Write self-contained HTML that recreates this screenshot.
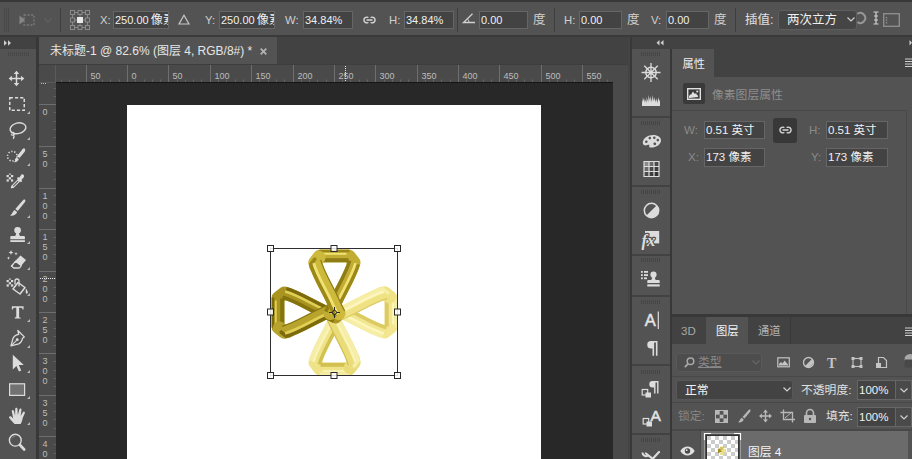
<!DOCTYPE html>
<html lang="zh"><head><meta charset="utf-8"><title>PS</title>
<style>
*{box-sizing:border-box;margin:0;padding:0}
html,body{width:912px;height:459px;overflow:hidden;background:#535353}
body{position:relative;font-family:"Liberation Sans","Noto Sans CJK SC",sans-serif;font-size:12px;color:#dcdcdc;line-height:1}
.a{position:absolute}
.t{position:absolute;white-space:nowrap;line-height:16px;height:16px}
.in{position:absolute;background:#434343;border:1px solid #666;height:18px;top:11px;color:#f0f0f0;font-size:11px;line-height:17px;padding-left:1px;white-space:nowrap;overflow:hidden}
.in b{font-weight:normal;font-size:12.2px;margin-left:-1px}
.sep{position:absolute;width:1px;background:#3e3e3e;top:8px;height:24px}
.lab{color:#cfcfcf}
svg{position:absolute;overflow:visible}
.rt{position:absolute;font-size:10px;color:#b4b4b4;line-height:10px}
</style></head><body>
<!-- top edge -->
<div class="a" style="left:0;top:0;width:912px;height:2px;background:#383838"></div>
<!-- options bar -->
<div class="a" id="opt" style="left:0;top:2px;width:912px;height:34px;background:#535353"></div>
<div class="a" style="left:0;top:35px;width:912px;height:2px;background:#3a3a3a"></div>


<!-- options bar content -->
<svg style="left:4px;top:8px" width="6" height="24"><g stroke="#484848" stroke-width="1"><path d="M0.5 0V24M2.5 0V24M4.5 0V24"/></g></svg>
<svg style="left:18px;top:11px" width="20" height="18" viewBox="0 0 20 18"><g fill="none" stroke="#7c7c7c" stroke-width="1.3"><rect x="6" y="4" width="10" height="10" stroke-dasharray="2 1.6"/></g><path d="M1.5 4.5L7 9L1.5 13.5Z" fill="#868686"/></svg>
<svg style="left:44px;top:18px" width="8" height="5" viewBox="0 0 8 5"><path d="M0.5 0.5L4 4L7.5 0.5" fill="none" stroke="#606060" stroke-width="1.3"/></svg>
<div class="sep" style="left:60px"></div>
<svg style="left:70px;top:10px" width="20" height="20" viewBox="0 0 20 20"><g fill="none" stroke="#8a8a8a" stroke-width="1"><rect x="0.5" y="0.5" width="4" height="4"/><rect x="8" y="0.5" width="4" height="4"/><rect x="15.5" y="0.5" width="4" height="4"/><rect x="0.5" y="8" width="4" height="4"/><rect x="15.5" y="8" width="4" height="4"/><rect x="0.5" y="15.5" width="4" height="4"/><rect x="8" y="15.5" width="4" height="4"/><rect x="15.5" y="15.5" width="4" height="4"/><path d="M4.5 2.5H8M12 2.5H15.5M4.5 17.5H8M12 17.5H15.5M2.5 4.5V8M2.5 12V15.5M17.500 4.5V8M17.5 12V15.500M4.500 10H7M13 10H15.5M10 4.500V7M10 13V15.500"/></g><rect x="7" y="7" width="6" height="6" fill="#e8e8e8"/></svg>
<div class="t lab" style="left:100px;top:12px;font-size:11.3px">X:</div>
<div class="in" style="left:113px;width:56px">250.00 <b>像素</b></div>
<svg style="left:178px;top:13.500px" width="12" height="11" viewBox="0 0 12 11"><path d="M6 1.200L11 10H1Z" fill="none" stroke="#c8c8c8" stroke-width="1.200"/></svg>
<div class="t lab" style="left:205px;top:12px;font-size:11.3px">Y:</div>
<div class="in" style="left:219px;width:56px">250.00 <b>像素</b></div>
<div class="t lab" style="left:285px;top:12px;font-size:11.3px">W:</div>
<div class="in" style="left:303px;width:50px">34.84%</div>
<svg style="left:362px;top:15.500px" width="15" height="8" viewBox="0 0 14.400 8"><g fill="none" stroke="#d8d8d8" stroke-width="1.4" stroke-linecap="round"><path d="M5.600 1.300A2.900 2.900 0 1 0 5.600 6.700"/><path d="M8.800 1.300A2.900 2.900 0 1 1 8.800 6.700"/><path d="M4.700 4H9.700"/></g></svg>
<div class="t lab" style="left:389px;top:12px;font-size:11.3px">H:</div>
<div class="in" style="left:404px;width:50px">34.84%</div>
<div class="sep" style="left:457px"></div>
<svg style="left:462px;top:13px" width="14" height="11" viewBox="0 0 14 11"><path d="M10.500 0.800L1.500 9.500H13" fill="none" stroke="#d0d0d0" stroke-width="1.300"/><path d="M7 9.500A5.500 5.500 0 0 0 5.400 5.700" fill="none" stroke="#d0d0d0" stroke-width="1"/></svg>
<div class="in" style="left:479px;width:49px">0.00</div>
<div class="t lab" style="left:533px;top:12px;font-size:12.5px">度</div>
<div class="sep" style="left:554px"></div>
<div class="t lab" style="left:564px;top:12px;font-size:11.3px">H:</div>
<div class="in" style="left:579px;width:43px">0.00</div>
<div class="t lab" style="left:627px;top:12px;font-size:12.5px">度</div>
<div class="t lab" style="left:651px;top:12px;font-size:11.3px">V:</div>
<div class="in" style="left:666px;width:43px">0.00</div>
<div class="t lab" style="left:714px;top:12px;font-size:12.5px">度</div>
<div class="sep" style="left:735px"></div>
<div class="t lab" style="left:745px;top:12px;font-size:12.5px;color:#e0e0e0">插值:</div>
<div class="a" style="left:778px;top:10px;width:79px;height:20px;background:#454545;border:1px solid #5e5e5e;border-radius:3px"></div>
<div class="t" style="left:787px;top:12px;font-size:12.5px;color:#f0f0f0">两次立方</div>
<svg style="left:847px;top:17px" width="8" height="5" viewBox="0 0 8 5"><path d="M0.500 0.500L4 4L7.500 0.500" fill="none" stroke="#d0d0d0" stroke-width="1.200"/></svg>
<svg style="left:857px;top:12px" width="12" height="12" viewBox="0 0 12 12"><path d="M0.500 1.800A5 5 0 1 1 0.500 10.200" fill="none" stroke="#969696" stroke-width="2"/></svg>
<svg style="left:873px;top:11px" width="6" height="14" viewBox="0 0 6 14"><g stroke="#d0d0d0" stroke-width="1.200" fill="none"><path d="M0.500 1H5.500M3 1V13M0.500 13H5.500M1 5H5M1 9H5"/></g></svg>
<svg style="left:883px;top:13px" width="17" height="14" viewBox="0 0 17 14"><rect x="0.700" y="0.700" width="15.600" height="12.600" fill="none" stroke="#8c8c8c" stroke-width="1.400"/><path d="M3.500 4V11" stroke="#8c8c8c" stroke-width="1.400" stroke-dasharray="1.500 1"/></svg>

<!-- left toolbar -->
<div class="a" style="left:0;top:37px;width:36px;height:12px;background:#424242"></div>
<div class="a" style="left:0;top:49px;width:36px;height:410px;background:#535353"></div>
<div class="a" style="left:36px;top:37px;width:3px;height:422px;background:#383838"></div>

<svg style="left:4px;top:40px" width="8" height="6" viewBox="0 0 8 6"><path d="M0 0.300L3 3L0 5.700ZM4 0.300L7 3L4 5.700Z" fill="#d0d0d0"/></svg>
<svg style="left:8px;top:52px" width="21" height="4" viewBox="0 0 21 4"><path d="M0.500 0V4M2.500 0V4M4.500 0V4M6.500 0V4M8.500 0V4M10.500 0V4M12.500 0V4M14.500 0V4M16.500 0V4M18.500 0V4M20.500 0V4" stroke="#484848" stroke-width="1"/></svg>
<svg style="left:4px;top:65px" width="26" height="26" viewBox="0 0 26 26"><g fill="#dcdcdc" transform="translate(12.500,13.500) scale(0.92) translate(-12.500,-13.500)"><path d="M12.500 5L15.500 8.500H13.300V12.700H17.500V10.500L21 13.500L17.500 16.500V14.300H13.300V18.500H15.500L12.500 22L9.500 18.500H11.700V14.300H7.500V16.500L4 13.500L7.500 10.500V12.700H11.700V8.500H9.500Z"/></g></svg>
<svg style="left:4px;top:91px" width="26" height="26" viewBox="0 0 26 26"><rect x="5.750" y="6.750" width="14.500" height="12.500" fill="none" stroke="#dcdcdc" stroke-width="1.500" stroke-dasharray="3.200 2"/><path d="M26 20V23H23Z" fill="#b8b8b8"/></svg>
<svg style="left:4px;top:117px" width="26" height="26" viewBox="0 0 26 26"><g fill="none" stroke="#dcdcdc" stroke-width="1.400"><ellipse cx="14" cy="11.300" rx="8" ry="5.300" transform="rotate(-14 14 11.300)"/><path d="M7.500 15.800c1.500-1 3.200 0.200 2.600 1.600c-0.500 1.100-2.400 1-2.900-0.200M9.800 17.600c0.500 1.600 0.200 3.200-0.600 4.200"/></g><path d="M26 20V23H23Z" fill="#b8b8b8"/></svg>
<svg style="left:4px;top:143px" width="26" height="26" viewBox="0 0 26 26"><g><circle cx="8.300" cy="13.200" r="4.800" fill="none" stroke="#dcdcdc" stroke-width="1.500" stroke-dasharray="1.300 1.700"/><path d="M20.500 5.500c1.200 0.800 0.800 2.200 0 3.400L15.500 15l-2.600-1.800l5-6.300c0.800-1 1.800-1.900 2.600-1.400Z" fill="#dcdcdc"/><path d="M12.300 14.200l2.500 1.800c-0.500 2-2.300 3.500-5 3.200c1.800-1.200 1.500-3.500 2.500-5Z" fill="#dcdcdc"/></g><path d="M26 20V23H23Z" fill="#b8b8b8"/></svg>
<svg style="left:4px;top:169px" width="26" height="26" viewBox="0 0 26 26"><g><g transform="translate(-2,0.500)"><path d="M19.500 5c1.500-0.800 3.300 1 2.500 2.500l-2.600 3l0.900 0.900l-1.400 1.400l-0.900-0.900l-6 6c-0.700 0.700-1.800 0.500-2.400 1.100l-0.900-0.900c0.600-0.600 0.400-1.700 1.100-2.400l6-6l-0.900-0.900l1.400-1.400l0.900 0.900Z" fill="#dcdcdc"/><path d="M15.800 11.200l-5 5l0.700 0.700l5-5Z" fill="#535353"/></g><g fill="#dcdcdc" transform="translate(1.500,0.500) scale(1.1)"><rect x="1" y="5" width="2" height="2"/><rect x="5" y="5" width="2" height="2"/><rect x="3" y="7" width="2" height="2"/><rect x="1" y="9" width="2" height="2"/><rect x="5" y="9" width="2" height="2"/><rect x="3" y="3.500" width="2" height="1.500" opacity=".6"/></g></g></svg>
<svg style="left:4px;top:195px" width="26" height="26" viewBox="0 0 26 26"><g fill="#dcdcdc"><path d="M20.800 4.600c1 0.700 0.600 1.900-0.200 3L13.800 16l-2.500-1.900l7-8.200c0.800-1 1.700-1.800 2.500-1.300Z"/><path d="M10.500 15l2.600 2c-0.600 2.300-3.200 4.200-7.100 3.600c2.600-1.400 2.500-4 4.500-5.600Z"/></g><path d="M26 20V23H23Z" fill="#b8b8b8"/></svg>
<svg style="left:4px;top:221px" width="26" height="26" viewBox="0 0 26 26"><g fill="#dcdcdc"><circle cx="13.600" cy="9.300" r="3.300"/><path d="M12 11h3.200c-0.300 1.800 0 3.200 0.900 4h3.600c0.800 0 1.200 0.500 1.200 1.200v2H6.300v-2c0-0.700 0.400-1.200 1.200-1.200h3.600c0.900-0.800 1.200-2.200 0.900-4Z"/><rect x="6.300" y="19.200" width="14.600" height="1.800"/></g><path d="M26 20V23H23Z" fill="#b8b8b8"/></svg>
<svg style="left:4px;top:247px" width="26" height="26" viewBox="0 0 26 26"><g><path d="M16.500 8.500l5.500 4.500l-7 8.500h-5.500l-3-2.500Z" fill="#dcdcdc"/><path d="M11.500 14.200l5.800 4.700l-1.700 2h-5.800l-2-1.700Z" fill="#535353" stroke="#dcdcdc" stroke-width="1.100"/><g fill="#dcdcdc"><path d="M7 3l0.700 1.800L9.500 5.500L7.700 6.200L7 8L6.300 6.200L4.500 5.500L6.300 4.800Z"/><path d="M12 5l0.500 1.200l1.200 0.500l-1.200 0.500L12 8.400l-0.500-1.200l-1.200-0.500l1.200-0.500Z"/><path d="M4.500 9.500l0.500 1.100l1.100 0.500l-1.100 0.500l-0.500 1.100l-0.500-1.100l-1.100-0.500l1.100-0.500Z"/></g></g><path d="M26 20V23H23Z" fill="#b8b8b8"/></svg>
<svg style="left:4px;top:273px" width="26" height="26" viewBox="0 0 26 26"><g fill="#dcdcdc" transform="translate(1.500,1.500) scale(1.1)"><rect x="1" y="5" width="2" height="2"/><rect x="5" y="5" width="2" height="2"/><rect x="3" y="7" width="2" height="2"/><rect x="1" y="9" width="2" height="2"/><rect x="5" y="9" width="2" height="2"/><rect x="3" y="3.500" width="2" height="1.500" opacity=".6"/></g><path d="M14 9.500l7 5l-5 6.500l-7-5Z" fill="#535353" stroke="#dcdcdc" stroke-width="1.500" stroke-linejoin="round"/><path d="M15 13.500V8a2 2 0 0 0-4 0v3.500" fill="none" stroke="#dcdcdc" stroke-width="1.300"/><path d="M21.800 15.500c1.300 1.500 2.200 3 2 4.300c-0.200 1.200-1.800 1.200-2 0c-0.200-1.300 0.100-2.500 0-4.300Z" fill="#dcdcdc"/><path d="M26 20V23H23Z" fill="#b8b8b8"/></svg>
<svg style="left:4px;top:299px" width="26" height="26" viewBox="0 0 26 26"><g transform="translate(13.700,13.200) scale(0.78) translate(-13,-13)"><path d="M5.500 5.500h15v4h-1.200c-0.300-1.600-0.800-2.200-2.300-2.200h-2.200v11.200c0 1.100 0.500 1.400 2 1.500v1.200H9.200v-1.200c1.500-0.100 2-0.400 2-1.500V7.300H9c-1.500 0-2 0.600-2.300 2.200H5.500Z" fill="#dcdcdc"/></g><path d="M26 20V23H23Z" fill="#b8b8b8"/></svg>
<svg style="left:4px;top:325px" width="26" height="26" viewBox="0 0 26 26"><g transform="translate(13.400,13.200) scale(0.86) translate(-13,-13.500)"><g><path d="M13.500 4.500l7.500 7.500l-2 1.500c-0.500 3-2 5.500-4.500 6.500l-9 2.500l2.500-9c1-2.500 3.500-4 6.500-4.500Z" fill="none" stroke="#dcdcdc" stroke-width="1.500" stroke-linejoin="round"/><path d="M5.800 22.200l6-6" stroke="#dcdcdc" stroke-width="1.200"/><circle cx="12.800" cy="15.200" r="1.700" fill="#dcdcdc"/></g></g><path d="M26 20V23H23Z" fill="#b8b8b8"/></svg>
<svg style="left:4px;top:350px" width="26" height="26" viewBox="0 0 26 26"><g transform="translate(13.200,13) scale(0.92) translate(-13.300,-13.500)"><path d="M8.500 4.500v16l4-3.700l2.700 6l2.500-1.100l-2.700-5.900h5.500Z" fill="#dcdcdc"/></g><path d="M26 20V23H23Z" fill="#b8b8b8"/></svg>
<svg style="left:4px;top:376px" width="26" height="26" viewBox="0 0 26 26"><rect x="5.600" y="7.800" width="15" height="11.600" fill="#727272" stroke="#dcdcdc" stroke-width="1.200"/><path d="M26 20V23H23Z" fill="#b8b8b8"/></svg>
<svg style="left:4px;top:402px" width="26" height="26" viewBox="0 0 26 26"><path d="M10.500 22c-1.800-1.800-3.800-4-5.200-6c-0.900-1.300 0.700-2.500 1.900-1.400l2 2L7.800 9.500c-0.300-1.500 1.700-2 2.100-0.500l1.200 4.500L11.200 7c0-1.600 2.200-1.600 2.300 0l0.300 6.300L15.300 7.500c0.300-1.500 2.400-1.100 2.200 0.400l-0.900 6l2.300-3.700c0.800-1.300 2.500-0.300 1.900 1l-2.200 5c-0.300 2.500-1 4.300-2 5.800Z" fill="#dcdcdc"/><path d="M26 20V23H23Z" fill="#b8b8b8"/></svg>
<svg style="left:4px;top:428px" width="26" height="26" viewBox="0 0 26 26"><g fill="none" stroke="#dcdcdc"><circle cx="11.300" cy="12.200" r="5.900" stroke-width="1.400"/><path d="M16 17l4.200 4.500" stroke-width="2.600" stroke-linecap="round"/><path d="M8 10.500a3.600 3.600 0 0 1 3.300-2.300" stroke-width="0.800" stroke="#8a8a8a"/></g></svg>

<!-- doc tab bar -->
<div class="a" style="left:39px;top:37px;width:592px;height:28px;background:#424242"></div>
<div class="a" style="left:39px;top:37px;width:238px;height:28px;background:#535353"></div>
<div class="t" style="left:50px;top:43px;font-size:12px;color:#e6e6e6">未标题-1 @ 82.6% (图层 4, RGB/8#) *</div>

<svg style="left:260px;top:48px" width="7" height="7" viewBox="0 0 7 7"><path d="M0.700 0.700L6.300 6.300M6.300 0.700L0.700 6.300" stroke="#b4b4b4" stroke-width="1.700"/></svg>
<!-- rulers -->
<div class="a" style="left:39px;top:65px;width:574px;height:17px;background:#4a4a4a"></div>
<div class="a" style="left:39px;top:82px;width:17px;height:377px;background:#4a4a4a"></div>
<!-- canvas -->
<div class="a" style="left:56px;top:82px;width:557px;height:377px;background:#282828"></div>
<div class="a" style="left:127px;top:105px;width:414px;height:354px;background:#fff"></div>
<svg id="rul" style="left:0;top:0" width="912" height="459" viewBox="0 0 912 459" font-family="Liberation Sans, sans-serif" font-size="9" fill="#bdbdbd">
<path d="M86.5 65V82M127.5 65V82M168.5 65V82M210.5 65V82M251.5 65V82M293.5 65V82M334.5 65V82M375.5 65V82M417.5 65V82M458.5 65V82M499.5 65V82M541.5 65V82M582.5 65V82" stroke="#6e6e6e" stroke-width="1"/><path d="M61.5 79.500V82M69.5 79.500V82M77.5 79.500V82M94.5 79.500V82M102.5 79.500V82M110.5 79.500V82M119.5 79.500V82M135.5 79.500V82M144.5 79.500V82M152.5 79.500V82M160.5 79.500V82M177.5 79.500V82M185.5 79.500V82M193.5 79.500V82M201.5 79.500V82M218.5 79.500V82M226.5 79.500V82M235.5 79.500V82M243.5 79.500V82M259.5 79.500V82M268.5 79.500V82M276.5 79.500V82M284.5 79.500V82M301.5 79.500V82M309.5 79.500V82M317.5 79.500V82M326.5 79.500V82M342.5 79.500V82M350.5 79.500V82M359.5 79.500V82M367.5 79.500V82M384.5 79.500V82M392.5 79.500V82M400.5 79.500V82M408.5 79.500V82M425.5 79.500V82M433.5 79.500V82M441.5 79.500V82M450.5 79.500V82M466.5 79.500V82M475.5 79.500V82M483.5 79.500V82M491.5 79.500V82M508.5 79.500V82M516.5 79.500V82M524.5 79.500V82M532.5 79.500V82M549.5 79.500V82M557.5 79.500V82M566.5 79.500V82M574.5 79.500V82M590.5 79.500V82M599.5 79.500V82M607.5 79.500V82" stroke="#626262" stroke-width="1"/>
<text x="90.5" y="78.800">50</text><text x="131.5" y="78.800">0</text><text x="172.5" y="78.800">50</text><text x="214.5" y="78.800">100</text><text x="255.5" y="78.800">150</text><text x="297.5" y="78.800">200</text><text x="338.5" y="78.800">250</text><text x="379.5" y="78.800">300</text><text x="421.5" y="78.800">350</text><text x="462.5" y="78.800">400</text><text x="503.5" y="78.800">450</text><text x="545.5" y="78.800">500</text><text x="586.5" y="78.800">550</text>
<path d="M39 104.5H56M39 146.5H56M39 188.5H56M39 229.5H56M39 271.5H56M39 312.5H56M39 353.5H56M39 395.5H56M39 436.5H56" stroke="#6e6e6e" stroke-width="1"/><path d="M53.500 88.5H56M53.500 96.5H56M53.500 112.5H56M53.500 121.5H56M53.500 129.5H56M53.500 137.5H56M53.500 154.5H56M53.500 162.5H56M53.500 171.5H56M53.500 179.5H56M53.500 195.5H56M53.500 204.5H56M53.500 212.5H56M53.500 220.5H56M53.500 237.5H56M53.500 245.5H56M53.500 254.5H56M53.500 262.5H56M53.500 278.5H56M53.500 287.5H56M53.500 295.5H56M53.500 303.5H56M53.500 320.5H56M53.500 328.5H56M53.500 336.5H56M53.500 345.5H56M53.500 361.5H56M53.500 370.5H56M53.500 378.5H56M53.500 386.5H56M53.500 403.5H56M53.500 411.5H56M53.500 419.5H56M53.500 428.5H56M53.500 444.5H56M53.500 453.5H56" stroke="#626262" stroke-width="1"/>
<text x="42.500" y="115.0">0</text><text x="42.500" y="157.0">5</text><text x="42.500" y="167.0">0</text><text x="42.500" y="199.0">1</text><text x="42.500" y="209.0">0</text><text x="42.500" y="219.0">0</text><text x="42.500" y="240.0">1</text><text x="42.500" y="250.0">5</text><text x="42.500" y="260.0">0</text><text x="42.500" y="282.0">2</text><text x="42.500" y="292.0">0</text><text x="42.500" y="302.0">0</text><text x="42.500" y="323.0">2</text><text x="42.500" y="333.0">5</text><text x="42.500" y="343.0">0</text><text x="42.500" y="364.0">3</text><text x="42.500" y="374.0">0</text><text x="42.500" y="384.0">0</text><text x="42.500" y="406.0">3</text><text x="42.500" y="416.0">5</text><text x="42.500" y="426.0">0</text><text x="42.500" y="447.0">4</text><text x="42.500" y="457.0">0</text><text x="42.500" y="467.0">0</text>
<path d="M39 82.500H56M55.500 65V82" stroke="#5a5a5a" stroke-width="1" fill="none"/><path d="M41 83.500H47" stroke="#bdbdbd" stroke-width="1" stroke-dasharray="1 1" fill="none"/><path d="M56 82.500H613" stroke="#161616" stroke-width="1"/><path d="M345.500 66V82" stroke="#e8e8e8" stroke-width="1" stroke-dasharray="1 1" fill="none"/><path d="M40 278.500H56" stroke="#e8e8e8" stroke-width="1" stroke-dasharray="1 1" fill="none"/></svg>
<svg style="left:0;top:0" width="912" height="459" viewBox="0 0 912 459">
<g transform="translate(334.500,312.500)"><g transform="rotate(180)" fill="none" stroke-linejoin="round" stroke-linecap="butt"><path d="M-4.500,1L0,-8C6,-22 16,-37 19.500,-50L14.500,-56.500H-14.500L-19.500,-50L-18.800,-46" stroke="#efe388" stroke-width="13" stroke-linecap="round"/><path d="M-4.500,1L0,-8C6,-22 16,-37 19.500,-50" stroke="#f6eda8" stroke-width="3.500" transform="translate(4.300,1.900)"/><path d="M-4.500,1L0,-8C6,-22 16,-37 19.500,-50" stroke="#faf3b6" stroke-width="2.600" transform="translate(1.500,0.700)"/><path d="M-4.500,1L0,-8C6,-22 16,-37 19.500,-50" stroke="#d2c050" stroke-width="3.500" transform="translate(-4.300,-1.900)"/><path d="M-15,-61.500H15" stroke="#f6eda8" stroke-width="2.500"/><path d="M-12,-58.700H12" stroke="#faf3b6" stroke-width="2"/><path d="M-14,-52.300H14" stroke="#d2c050" stroke-width="4"/><path d="M-15.500,-55.200L-19.500,-50C-16,-37 -6,-22 0,-8L4.500,1" stroke="#eadc78" stroke-width="13" stroke-linecap="round"/><path d="M-15.500,-55.200L-19.500,-50C-16,-37 -6,-22 0,-8L4.500,1" stroke="#f6eda8" stroke-width="3.800" transform="translate(-4.200,1.900)" stroke-linecap="round"/><path d="M-19.500,-50C-16,-37 -6,-22 0,-8L4.500,1" stroke="#faf3b6" stroke-width="2.800" transform="translate(-1.300,0.600)"/><path d="M-19.500,-50C-16,-37 -6,-22 0,-8L4.500,1" stroke="#d2c050" stroke-width="1.200" transform="translate(5.700,-2.600)"/></g><g transform="rotate(90)" fill="none" stroke-linejoin="round" stroke-linecap="butt"><path d="M-4.500,1L0,-8C6,-22 16,-37 19.500,-50L14.500,-56.500H-14.500L-19.500,-50L-18.800,-46" stroke="#f2e790" stroke-width="13" stroke-linecap="round"/><path d="M-4.500,1L0,-8C6,-22 16,-37 19.500,-50" stroke="#f6eda6" stroke-width="3.500" transform="translate(4.300,1.900)"/><path d="M-4.500,1L0,-8C6,-22 16,-37 19.500,-50" stroke="#fdf6bc" stroke-width="2.600" transform="translate(1.500,0.700)"/><path d="M-4.500,1L0,-8C6,-22 16,-37 19.500,-50" stroke="#dccb62" stroke-width="3.500" transform="translate(-4.300,-1.900)"/><path d="M-15,-61.500H15" stroke="#f6eda6" stroke-width="2.500"/><path d="M-12,-58.700H12" stroke="#fdf6bc" stroke-width="2"/><path d="M-14,-52.300H14" stroke="#dccb62" stroke-width="4"/><path d="M-15.500,-55.200L-19.500,-50C-16,-37 -6,-22 0,-8L4.500,1" stroke="#efe284" stroke-width="13" stroke-linecap="round"/><path d="M-15.500,-55.200L-19.500,-50C-16,-37 -6,-22 0,-8L4.500,1" stroke="#f6eda6" stroke-width="3.800" transform="translate(-4.200,1.900)" stroke-linecap="round"/><path d="M-19.500,-50C-16,-37 -6,-22 0,-8L4.500,1" stroke="#fdf6bc" stroke-width="2.800" transform="translate(-1.300,0.600)"/><path d="M-19.500,-50C-16,-37 -6,-22 0,-8L4.500,1" stroke="#dccb62" stroke-width="1.200" transform="translate(5.700,-2.600)"/></g><g transform="rotate(270)" fill="none" stroke-linejoin="round" stroke-linecap="butt"><path d="M-4.500,1L0,-8C6,-22 16,-37 19.500,-50L14.500,-56.500H-14.500L-19.500,-50L-18.800,-46" stroke="#a8941f" stroke-width="13" stroke-linecap="round"/><path d="M-4.500,1L0,-8C6,-22 16,-37 19.500,-50" stroke="#7c6a0c" stroke-width="3.500" transform="translate(4.300,1.900)"/><path d="M-4.500,1L0,-8C6,-22 16,-37 19.500,-50" stroke="#dfcf54" stroke-width="2.600" transform="translate(1.500,0.700)"/><path d="M-4.500,1L0,-8C6,-22 16,-37 19.500,-50" stroke="#85730f" stroke-width="3.500" transform="translate(-4.300,-1.900)"/><path d="M-15,-61.500H15" stroke="#7c6a0c" stroke-width="2.500"/><path d="M-12,-58.700H12" stroke="#dfcf54" stroke-width="2"/><path d="M-14,-52.300H14" stroke="#85730f" stroke-width="4"/><path d="M-15.500,-55.200L-19.500,-50C-16,-37 -6,-22 0,-8L4.500,1" stroke="#b8a42c" stroke-width="13" stroke-linecap="round"/><path d="M-15.500,-55.200L-19.500,-50C-16,-37 -6,-22 0,-8L4.500,1" stroke="#7c6a0c" stroke-width="3.800" transform="translate(-4.200,1.900)" stroke-linecap="round"/><path d="M-19.500,-50C-16,-37 -6,-22 0,-8L4.500,1" stroke="#dfcf54" stroke-width="2.800" transform="translate(-1.300,0.600)"/><path d="M-19.500,-50C-16,-37 -6,-22 0,-8L4.500,1" stroke="#85730f" stroke-width="1.200" transform="translate(5.700,-2.600)"/></g><g transform="rotate(0)" fill="none" stroke-linejoin="round" stroke-linecap="butt"><path d="M-4.500,1L0,-8C6,-22 16,-37 19.500,-50L14.500,-56.500H-14.500L-19.500,-50L-18.800,-46" stroke="#c2ad33" stroke-width="13" stroke-linecap="round"/><path d="M-4.500,1L0,-8C6,-22 16,-37 19.500,-50" stroke="#9c8818" stroke-width="3.500" transform="translate(4.300,1.900)"/><path d="M-4.500,1L0,-8C6,-22 16,-37 19.500,-50" stroke="#f0e272" stroke-width="2.600" transform="translate(1.500,0.700)"/><path d="M-4.500,1L0,-8C6,-22 16,-37 19.500,-50" stroke="#8e7c16" stroke-width="3.500" transform="translate(-4.300,-1.900)"/><path d="M-15,-61.500H15" stroke="#9c8818" stroke-width="2.500"/><path d="M-12,-58.700H12" stroke="#f0e272" stroke-width="2"/><path d="M-14,-52.300H14" stroke="#8e7c16" stroke-width="4"/><path d="M-15.500,-55.200L-19.500,-50C-16,-37 -6,-22 0,-8L4.500,1" stroke="#cdb93c" stroke-width="13" stroke-linecap="round"/><path d="M-15.500,-55.200L-19.500,-50C-16,-37 -6,-22 0,-8L4.500,1" stroke="#9c8818" stroke-width="3.800" transform="translate(-4.200,1.900)" stroke-linecap="round"/><path d="M-19.500,-50C-16,-37 -6,-22 0,-8L4.500,1" stroke="#f0e272" stroke-width="2.800" transform="translate(-1.300,0.600)"/><path d="M-19.500,-50C-16,-37 -6,-22 0,-8L4.500,1" stroke="#8e7c16" stroke-width="1.200" transform="translate(5.700,-2.600)"/></g></g>
<g fill="none" stroke="#2e2e2e" stroke-width="1"><rect x="270.500" y="248.500" width="127" height="127"/></g><g fill="#ffffff" fill-opacity="0.850" stroke="#2a2a2a" stroke-width="1"><rect x="267.5" y="245.5" width="6" height="6"/><rect x="331.0" y="245.5" width="6" height="6"/><rect x="394.5" y="245.5" width="6" height="6"/><rect x="267.5" y="309.0" width="6" height="6"/><rect x="394.5" y="309.0" width="6" height="6"/><rect x="267.5" y="372.5" width="6" height="6"/><rect x="331.0" y="372.5" width="6" height="6"/><rect x="394.5" y="372.5" width="6" height="6"/></g><g fill="none" stroke="#2a2a2a" stroke-width="1"><circle cx="334.500" cy="312.500" r="2"/><path d="M334.500 307V310.500M334.500 314.500V318M329 312.500H332.500M336.500 312.500H340"/></g></svg>
<!-- scrollbar area -->
<div class="a" style="left:613px;top:65px;width:17px;height:394px;background:#4a4a4a"></div>
<div class="a" style="left:628px;top:37px;width:2px;height:422px;background:#444"></div>
<div class="a" style="left:630px;top:37px;width:2px;height:422px;background:#383838"></div>
<div class="a" style="left:39px;top:64px;width:587px;height:1px;background:#3e3e3e"></div>

<!-- right header -->
<div class="a" style="left:632px;top:37px;width:280px;height:12px;background:#424242"></div>
<!-- icon column -->
<div class="a" style="left:632px;top:49px;width:38px;height:410px;background:#535353"></div>
<div class="a" style="left:670px;top:49px;width:2px;height:410px;background:#383838"></div>
<svg style="left:0;top:0" width="912" height="459" viewBox="0 0 912 459">
<path d="M659.500 40L656.500 42.700L659.500 45.400ZM663.500 40L660.500 42.700L663.500 45.400Z" fill="#d0d0d0"/>
<path d="M909.500 40L912 42.700L909.500 45.400Z" fill="#d0d0d0"/>
<path d="M641.5 52V56M643.5 52V56M645.5 52V56M647.5 52V56M649.5 52V56M651.5 52V56M653.5 52V56M655.5 52V56M657.5 52V56M659.5 52V56" stroke="#454545" stroke-width="1"/><path d="M641.5 121V125M643.5 121V125M645.5 121V125M647.5 121V125M649.5 121V125M651.5 121V125M653.5 121V125M655.5 121V125M657.5 121V125M659.5 121V125" stroke="#454545" stroke-width="1"/><path d="M641.5 190V194M643.5 190V194M645.5 190V194M647.5 190V194M649.5 190V194M651.5 190V194M653.5 190V194M655.5 190V194M657.5 190V194M659.5 190V194" stroke="#454545" stroke-width="1"/><path d="M641.5 258V262M643.5 258V262M645.5 258V262M647.5 258V262M649.5 258V262M651.5 258V262M653.5 258V262M655.5 258V262M657.5 258V262M659.5 258V262" stroke="#454545" stroke-width="1"/><path d="M641.5 300V304M643.5 300V304M645.5 300V304M647.5 300V304M649.5 300V304M651.5 300V304M653.5 300V304M655.5 300V304M657.5 300V304M659.5 300V304" stroke="#454545" stroke-width="1"/><path d="M641.5 370V374M643.5 370V374M645.5 370V374M647.5 370V374M649.5 370V374M651.5 370V374M653.5 370V374M655.5 370V374M657.5 370V374M659.5 370V374" stroke="#454545" stroke-width="1"/><path d="M641.5 438V442M643.5 438V442M645.5 438V442M647.5 438V442M649.5 438V442M651.5 438V442M653.5 438V442M655.5 438V442M657.5 438V442M659.5 438V442" stroke="#454545" stroke-width="1"/><path d="M632 117H670" stroke="#3c3c3c" stroke-width="1.600"/><path d="M632 186H670" stroke="#3c3c3c" stroke-width="1.600"/><path d="M632 255H670" stroke="#3c3c3c" stroke-width="1.600"/><path d="M632 296H670" stroke="#3c3c3c" stroke-width="1.600"/><path d="M632 365H670" stroke="#3c3c3c" stroke-width="1.600"/><path d="M632 434H670" stroke="#3c3c3c" stroke-width="1.600"/><g transform="translate(651,72.500)" stroke="#dcdcdc" fill="none"><circle r="5.200" stroke-width="1.500"/><circle r="1.600" fill="#dcdcdc" stroke="none"/><path d="M0 -9.500V9.500M-9.500 0H9.500M-6.700 -6.700L6.700 6.700M-6.700 6.700L6.700 -6.700" stroke-width="1.300"/></g>
<path d="M642 106L642.00 100.0L642.47 102.5L642.95 97.0L643.42 99.5L643.89 100.0L644.37 102.5L644.84 98.0L645.32 100.5L645.79 101.0L646.26 103.5L646.74 97.0L647.21 99.5L647.68 100.0L648.16 102.5L648.63 95.0L649.11 97.5L649.58 99.0L650.05 101.5L650.53 96.0L651.00 98.5L651.47 100.0L651.95 102.5L652.42 95.0L652.89 97.5L653.37 99.0L653.84 101.5L654.32 97.0L654.79 99.5L655.26 100.0L655.74 102.5L656.21 98.0L656.68 100.5L657.16 101.0L657.63 103.5L658.11 97.0L658.58 99.5L659.05 99.0L659.53 101.5L660 100V106Z" fill="#dcdcdc"/>
<g transform="translate(651.800,141.300)"><path d="M-9 1.500C-9 -3 -4 -6.300 1.500 -6.300C6 -6.300 9.200 -4 9.200 -1C9.200 3 5 6.300 -1 6.300C-2.500 6.300 -3 5.300 -2.500 4.500C-2 3.500 -3 3 -4.500 3.800C-6.500 4.800 -9 4 -9 1.500Z" fill="#dcdcdc"/><g fill="#535353"><circle cx="-5.500" cy="0.500" r="1.300"/><circle cx="-2" cy="-3.200" r="1.300"/><circle cx="2.500" cy="-3.600" r="1.300"/><circle cx="6" cy="-1.200" r="1.300"/><circle cx="3" cy="2.500" r="1.400"/></g></g>
<rect x="644" y="161.5" width="5" height="5" fill="#8a8a8a"/><rect x="649" y="161.5" width="5" height="5" fill="#6a6a6a"/><rect x="654" y="161.5" width="5" height="5" fill="#4a4a4a"/><rect x="644" y="166.5" width="5" height="5" fill="#6a6a6a"/><rect x="649" y="166.5" width="5" height="5" fill="#4a4a4a"/><rect x="654" y="166.5" width="5" height="5" fill="#3c3c3c"/><rect x="644" y="171.5" width="5" height="5" fill="#4a4a4a"/><rect x="649" y="171.5" width="5" height="5" fill="#3c3c3c"/><rect x="654" y="171.5" width="5" height="5" fill="#333"/><path d="M644 161.500H659V176.500H644ZM649 161.500V176.500M654 161.500V176.500M644 166.500H659M644 171.500H659" fill="none" stroke="#dcdcdc" stroke-width="1.200"/>
<g transform="translate(651.500,210.500)"><circle r="7.200" fill="none" stroke="#dcdcdc" stroke-width="1.500"/><path d="M5.100 -5.100A7.200 7.200 0 0 1 -5.100 5.100Z" fill="#dcdcdc"/></g>
<rect x="645" y="231" width="14.200" height="12.400" fill="#dcdcdc"/><text x="641.500" y="245.500" font-family="Liberation Serif, serif" font-style="italic" font-weight="bold" font-size="16.500" fill="#dcdcdc" stroke="#535353" stroke-width="2.400" paint-order="stroke" stroke-linejoin="round">fx</text>
<g fill="#dcdcdc"><rect x="641" y="271" width="1.800" height="1.800"/><rect x="644" y="271" width="4" height="1.800"/><rect x="641" y="274.200" width="1.800" height="1.800"/><rect x="644" y="274.200" width="4" height="1.800"/><rect x="641" y="277.400" width="1.800" height="1.800"/><rect x="644" y="277.400" width="3" height="1.800"/><circle cx="653.500" cy="274.700" r="3.100"/><path d="M652 276.500h3c-0.200 1.500 0 2.800 0.800 3.500h2.700c0.800 0 1.200 0.500 1.200 1.200v1.800h-12.400v-1.800c0-0.700 0.400-1.200 1.200-1.200h2.700c0.800-0.700 1-2 0.800-3.500Z"/><rect x="647.300" y="284.300" width="12.400" height="2.200"/></g>
<text x="644.800" y="326" font-family="Liberation Sans, sans-serif" font-size="16.500" fill="#e4e4e4" stroke="#e4e4e4" stroke-width="0.500">A</text><path d="M658.300 311.500V329" stroke="#dcdcdc" stroke-width="1.200"/>
<path d="M651 341h6.500v14.700h-1.600V342.600h-1.800v13.100h-1.600v-7.200h-1.500a3.750 3.750 0 0 1 0-7.500Z" fill="#dcdcdc"/>
<path d="M652.500 381h6v12.500h-1.400V382.400h-1.600v11.100h-1.400v-6.100h-1.600a3.200 3.200 0 0 1 0-6.400Z" fill="#dcdcdc"/><rect x="642.200" y="389.500" width="5.500" height="5.500" fill="#535353" stroke="#dcdcdc" stroke-width="1.200"/><rect x="645.500" y="392.500" width="5.500" height="5" fill="#dcdcdc"/>
<text x="650.500" y="421.400" font-family="Liberation Sans, sans-serif" font-size="15.500" fill="#e4e4e4" stroke="#e4e4e4" stroke-width="0.500">A</text><rect x="643.200" y="418.500" width="5.500" height="5.500" fill="#535353" stroke="#dcdcdc" stroke-width="1.200"/><rect x="646.500" y="421.500" width="5.500" height="5" fill="#dcdcdc"/>
<g stroke="#dcdcdc" stroke-width="2.200" fill="none" stroke-linecap="round"><path d="M646 453.500L658 463"/><path d="M659 452L646 466"/></g><path d="M642.500 452.500a3.500 3.500 0 0 0 5.500 3" fill="none" stroke="#dcdcdc" stroke-width="2"/>
</svg>
<!-- properties panel -->
<div class="a" style="left:672px;top:49px;width:240px;height:28px;background:#424242"></div>
<div class="a" style="left:672px;top:49px;width:42px;height:28px;background:#535353"></div>
<div class="a" style="left:672px;top:77px;width:240px;height:237px;background:#535353"></div>
<div class="t" style="left:682.500px;top:55.500px;color:#f0f0f0;font-size:11.200px">属性</div>
<svg style="left:905px;top:58px" width="7" height="9" viewBox="0 0 7 9"><path d="M0 1H7M0 3.500H7M0 6H7M0 8.500H7" stroke="#cfcfcf" stroke-width="1"/></svg>
<div class="a" style="left:683px;top:83px;width:22px;height:21px;background:#3a3a3a;border-radius:2px"></div>
<svg style="left:687px;top:88px" width="14" height="12" viewBox="0 0 14 12"><rect x="0.700" y="0.700" width="12.600" height="10.600" fill="none" stroke="#e0e0e0" stroke-width="1.400"/><path d="M2 10V8l1-1v-1l1 1l1-2l1-1.500l1 1.500l1 1l1-1l1 2l1 0.500v1.500Z" fill="#e0e0e0"/><circle cx="10.300" cy="3.500" r="1.100" fill="#e0e0e0"/></svg>
<div class="t" style="left:712px;top:87px;color:#8e8e8e;font-size:11.800px">像素图层属性</div>
<div class="a" style="left:672px;top:110px;width:234px;height:1px;background:#484848"></div>
<div class="a" style="left:906px;top:110px;width:1px;height:204px;background:#4a4a4a"></div>
<div class="t" style="left:684px;top:122px;color:#8a8a8a;font-size:11.500px">W:</div>
<div class="in" style="left:704px;top:121px;width:61px;height:18px;font-size:11.500px;padding-left:1px">0.51 英寸</div>
<div class="a" style="left:773px;top:118px;width:24px;height:25px;background:#383838;border-radius:3px"></div>
<svg style="left:778px;top:125.500px" width="15" height="8" viewBox="0 0 14.400 8"><g fill="none" stroke="#d8d8d8" stroke-width="1.4" stroke-linecap="round"><path d="M5.600 1.300A2.900 2.900 0 1 0 5.600 6.700"/><path d="M8.800 1.300A2.900 2.900 0 1 1 8.800 6.700"/><path d="M4.700 4H9.700"/></g></svg>
<div class="t" style="left:809px;top:122px;color:#8a8a8a;font-size:11.500px">H:</div>
<div class="in" style="left:826px;top:121px;width:62px;height:18px;font-size:11.500px;padding-left:1px">0.51 英寸</div>
<div class="t" style="left:688px;top:149px;color:#8a8a8a;font-size:11.500px">X:</div>
<div class="in" style="left:704px;top:148px;width:61px;height:19px;font-size:11.500px">173 像素</div>
<div class="t" style="left:811px;top:149px;color:#8a8a8a;font-size:11.500px">Y:</div>
<div class="in" style="left:826px;top:148px;width:62px;height:19px;font-size:11.500px">173 像素</div>

<!-- layers panel -->
<div class="a" style="left:672px;top:314px;width:240px;height:3px;background:#383838"></div>
<div class="a" style="left:672px;top:317px;width:240px;height:27px;background:#424242"></div>
<div class="a" style="left:706px;top:317px;width:42px;height:27px;background:#535353"></div>
<div class="a" style="left:790px;top:317px;width:1px;height:27px;background:#383838"></div>
<div class="a" style="left:672px;top:344px;width:240px;height:115px;background:#535353"></div>
<div class="t" style="left:681px;top:323px;color:#a8a8a8;font-size:11.500px">3D</div>
<div class="t" style="left:716px;top:323px;color:#f4f4f4;font-size:11.300px">图层</div>
<div class="t" style="left:758px;top:323px;color:#b4b4b4;font-size:11.300px">通道</div>
<svg style="left:905px;top:327px" width="7" height="9" viewBox="0 0 7 9"><path d="M0 1H7M0 3.500H7M0 6H7M0 8.500H7" stroke="#cfcfcf" stroke-width="1"/></svg>
<!-- filter row -->
<div class="a" style="left:676px;top:353px;width:86px;height:19px;background:#4d4d4d;border:1px solid #595959;border-radius:3px"></div>
<svg style="left:684px;top:357px" width="11" height="11" viewBox="0 0 11 11"><circle cx="6.500" cy="4.300" r="3.300" fill="none" stroke="#a8a8a8" stroke-width="1.500"/><path d="M4 6.800L0.800 10.200" stroke="#a8a8a8" stroke-width="1.800"/></svg>
<div class="t" style="left:698px;top:354px;color:#8a8a8a;font-size:11.800px;text-decoration:underline">类型</div>
<svg style="left:752px;top:360px" width="8" height="5" viewBox="0 0 8 5"><path d="M0.500 0.500L4 4L7.500 0.500" fill="none" stroke="#666" stroke-width="1.200"/></svg>
<svg style="left:777px;top:354px" width="135" height="18" viewBox="0 0 135 18">
<g fill="none" stroke="#c4c4c4" stroke-width="1.200"><rect x="0.800" y="3.800" width="11.500" height="9"/></g><path d="M2 11.500V10l2-2l1.500 1.500l2-3l3.500 4v1Z" fill="#c4c4c4"/>
<circle cx="31.500" cy="8.500" r="5" fill="none" stroke="#c4c4c4" stroke-width="1.300"/><path d="M35 5A5 5 0 0 1 28 12Z" fill="#c4c4c4"/>
<text x="50" y="13.500" font-family="Liberation Serif, serif" font-weight="bold" font-size="14" fill="#c4c4c4">T</text>
<g fill="none" stroke="#c4c4c4" stroke-width="1.100"><rect x="76" y="4.500" width="8" height="8"/></g><g fill="#c4c4c4"><rect x="74.500" y="3" width="3" height="3"/><rect x="82.500" y="3" width="3" height="3"/><rect x="74.500" y="11" width="3" height="3"/><rect x="82.500" y="11" width="3" height="3"/></g>
<path d="M101.500 3.500h5l3 3v7h-8Z" fill="none" stroke="#c4c4c4" stroke-width="1.200"/><rect x="99" y="9" width="5" height="5" fill="#c4c4c4"/>
<circle cx="133" cy="5.500" r="5.500" fill="#a8a8a8"/><rect x="127.500" y="5.500" width="8" height="8" fill="#484848"/>
</svg>
<div class="a" style="left:672px;top:376px;width:240px;height:1px;background:#484848"></div>
<!-- blend row -->
<div class="a" style="left:676px;top:380px;width:117px;height:20px;background:#434343;border:1px solid #575757;border-radius:3px"></div>
<div class="t" style="left:685px;top:382px;color:#f0f0f0;font-size:11.800px">正常</div>
<svg style="left:783px;top:387px" width="8" height="5" viewBox="0 0 8 5"><path d="M0.500 0.500L4 4L7.500 0.500" fill="none" stroke="#d0d0d0" stroke-width="1.200"/></svg>
<div class="t" style="left:801px;top:382px;color:#e0e0e0;font-size:11.800px">不透明度:</div>
<div class="in" style="left:857px;top:380px;width:39px;height:20px;line-height:18px;font-size:11.500px">100%</div>
<div class="a" style="left:896px;top:380px;width:16px;height:20px;background:#4a4a4a;border:1px solid #666;border-left:none"></div>
<svg style="left:900px;top:388px" width="8" height="5" viewBox="0 0 8 5"><path d="M0.500 0.500L4 4L7.500 0.500" fill="none" stroke="#d0d0d0" stroke-width="1.200"/></svg>
<div class="a" style="left:672px;top:402px;width:240px;height:1px;background:#484848"></div>
<!-- lock row -->
<div class="t" style="left:678px;top:408px;color:#868686;font-size:11.800px">锁定:</div>
<svg style="left:715px;top:408px" width="104" height="16" viewBox="0 0 104 16">
<g fill="#b8b8b8"><rect x="0.500" y="2.500" width="12" height="12" fill="none" stroke="#b8b8b8"/><rect x="1" y="3" width="3.700" height="3.700"/><rect x="8.400" y="3" width="3.700" height="3.700"/><rect x="4.700" y="6.700" width="3.700" height="3.700"/><rect x="1" y="10.400" width="3.700" height="3.700"/><rect x="8.400" y="10.400" width="3.700" height="3.700"/></g>
<g fill="#b8b8b8"><path d="M35 1.500c0.900 0.600 0.500 1.600-0.100 2.500L29.500 10.500l-2-1.500l5.500-6.300c0.600-0.800 1.300-1.500 2-1.200Z"/><path d="M26.600 9.800l2.100 1.600c-0.500 1.900-2.600 3.400-5.700 2.900c2-1.100 2-3.200 3.600-4.500Z"/></g>
<path d="M50.500 1.500L53 4.500H51.200V7.300H54V5.500L57 8L54 10.500V8.700H51.200V11.500H53L50.500 14.500L48 11.500H49.800V8.700H47V10.500L44 8L47 5.500V7.300H49.800V4.500H48Z" fill="#b8b8b8"/>
<g fill="none" stroke="#b8b8b8" stroke-width="1.300"><path d="M68.500 1.500V11.500H80M65.500 4.500H77.500V14.500"/><path d="M70 10L77 4" stroke-width="1"/></g>
<g fill="#b8b8b8"><rect x="89" y="7" width="12" height="8" rx="1"/><path d="M91.500 7V5a3.500 3.500 0 0 1 7 0V7" fill="none" stroke="#b8b8b8" stroke-width="1.600"/></g><circle cx="95" cy="11" r="1.200" fill="#535353"/>
</svg>
<div class="t" style="left:826px;top:408px;color:#e0e0e0;font-size:11.800px">填充:</div>
<div class="in" style="left:857px;top:407px;width:39px;height:20px;line-height:18px;font-size:11.500px">100%</div>
<div class="a" style="left:896px;top:407px;width:16px;height:20px;background:#4a4a4a;border:1px solid #666;border-left:none"></div>
<svg style="left:900px;top:415px" width="8" height="5" viewBox="0 0 8 5"><path d="M0.500 0.500L4 4L7.500 0.500" fill="none" stroke="#d0d0d0" stroke-width="1.200"/></svg>
<div class="a" style="left:672px;top:429px;width:240px;height:2px;background:#484848"></div>
<!-- layer row -->
<div class="a" style="left:700px;top:431px;width:208px;height:28px;background:#6b6b6b"></div>
<div class="a" style="left:700px;top:431px;width:1px;height:28px;background:#4a4a4a"></div>
<svg style="left:680px;top:446px" width="15" height="10" viewBox="0 0 15 10"><path d="M0.300 5C2.500 1.500 5 0.500 7.500 0.500S12.500 1.500 14.700 5C12.500 8.500 10 9.500 7.500 9.500S2.500 8.500 0.300 5Z" fill="#e0e0e0"/><circle cx="7.500" cy="5" r="2.700" fill="#4a4a4a"/><circle cx="6.700" cy="4.200" r="0.900" fill="#e0e0e0"/></svg>
<svg style="left:704px;top:433px" width="37" height="26" viewBox="0 0 37 26">
<defs><pattern id="ck" width="8" height="8" patternUnits="userSpaceOnUse" x="3" y="3"><rect width="8" height="8" fill="#fff"/><rect width="4" height="4" fill="#ccc"/><rect x="4" y="4" width="4" height="4" fill="#ccc"/></pattern></defs>
<rect x="0.500" y="0.500" width="36" height="30" fill="none" stroke="#9a9a9a"/>
<path d="M0.500 7V0.500H7M30 0.500H36.500V7" fill="none" stroke="#fff" stroke-width="1.200"/>
<rect x="1.500" y="1.500" width="34" height="30" fill="#333"/>
<rect x="3" y="3" width="31" height="30" fill="url(#ck)"/>
<g transform="translate(18,17.800) scale(0.06)" fill="none" stroke="#d8c450" stroke-width="26"><path d="M0,-5L-20,-55H20Z"/><path d="M0,5L-20,55H20Z" stroke="#ece08a"/><path d="M-5,0L-55,-20V20Z" stroke="#a08c20"/><path d="M5,0L55,-20V20Z" stroke="#ece08a"/></g>
</svg>
<div class="t" style="left:748px;top:444px;color:#f4f4f4;font-size:11.800px">图层 4</div>
</body></html>
